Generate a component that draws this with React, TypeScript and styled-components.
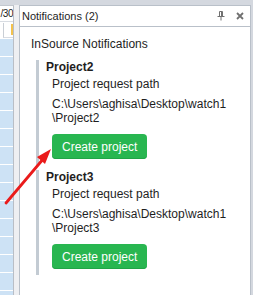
import React from 'react';
import styled, { createGlobalStyle } from 'styled-components';

interface Notice {
  name: string;
  folder: string;
}

const notices: Notice[] = [
  { name: 'Project2', folder: 'C:\\Users\\aghisa\\Desktop\\watch1' },
  { name: 'Project3', folder: 'C:\\Users\\aghisa\\Desktop\\watch1' },
];

const GlobalStyle = createGlobalStyle`
  html, body {
    margin: 0;
    padding: 0;
    background: #ffffff;
  }
  body {
    font-family: 'Liberation Sans', Arial, sans-serif;
    color: #1e1e1e;
  }
`;

const Screen = styled.div`
  position: relative;
  width: 253px;
  height: 295px;
  overflow: hidden;
  display: flex;
  flex-direction: column;
  background: #d4d8df;
`;

const TopStrip = styled.div`
  height: 5px;
  flex: none;
`;

const Body = styled.div`
  flex: 1;
  display: flex;
  min-height: 0;
`;

const Grid = styled.div`
  width: 13px;
  flex: none;
  display: flex;
  flex-direction: column;
  gap: 1px;
  background: #ffffff;
  border-right: 1px solid #b9bec6;
  border-top: 1px solid #c3c8cf;
`;

const GridHead = styled.div`
  height: 15px;
  flex: none;
  display: flex;
  justify-content: flex-end;
  align-items: center;
  font-size: 10px;
  letter-spacing: -0.5px;
  overflow: hidden;
  white-space: nowrap;
  border-bottom: 1px solid #d8dce2;
`;

const GridSub = styled.div`
  height: 14px;
  flex: none;
  position: relative;
  border-left: 1px solid #c9ced5;
  margin-left: 3px;
  border-bottom: 1px solid #d8dce2;
`;

const SubMark = styled.span`
  position: absolute;
  right: 0;
  top: 1px;
  width: 2px;
  height: 11px;
  background: #f3c24e;
`;

const GridCell = styled.div`
  height: 17px;
  flex: none;
  background: #cde2f5;
`;

const Splitter = styled.div`
  width: 5px;
  flex: none;
  background: #eeeff2;
`;

const Panel = styled.div`
  flex: 1;
  display: flex;
  flex-direction: column;
  background: #ffffff;
  border: 1px solid #b9c0c9;
  border-bottom: none;
  margin-right: 2px;
`;

const TitleBar = styled.div`
  height: 20px;
  flex: none;
  display: flex;
  align-items: center;
  padding-left: 2px;
  padding-right: 6px;
  font-size: 11px;
  border-bottom: 1px solid #b9c0c9;
`;

const TitleText = styled.span`
  flex: 1;
`;

const ToolIcon = styled.svg<{ gap: number }>`
  display: block;
  margin-left: ${p => p.gap}px;
`;

const Content = styled.div`
  padding: 10px 0 0 11px;
`;

const Heading = styled.div`
  font-size: 12px;
  line-height: 14px;
  margin-bottom: 9px;
`;

const Cards = styled.div`
  display: flex;
  flex-direction: column;
  gap: 5px;
  padding-left: 5px;
`;

const Card = styled.div`
  border-left: 3px solid #c3cbd3;
  padding: 0 0 6px 7px;
`;

const CardTitle = styled.div`
  font-size: 12px;
  line-height: 14px;
  font-weight: bold;
`;

const CardBody = styled.div`
  padding-left: 6px;
  font-size: 12px;
  line-height: 14px;
`;

const Label = styled.div`
  margin-top: 3px;
`;

const Path = styled.div`
  margin-top: 6px;
  width: 190px;
`;

const CreateButton = styled.button`
  display: block;
  margin-top: 9px;
  height: 25px;
  padding: 0 10px;
  border: none;
  border-radius: 4px;
  background: #28b650;
  box-shadow: inset 0 -1px 0 #21a446;
  color: #ffffff;
  font-family: 'Liberation Sans', Arial, sans-serif;
  font-size: 12px;
  cursor: pointer;
`;

const Arrow = styled.svg`
  position: absolute;
  left: 0;
  top: 0;
  pointer-events: none;
`;

const App = () => {
  const rows = Array.from({ length: 15 });
  return (
    <>
      <GlobalStyle />
      <Screen>
        <TopStrip />
        <Body>
          <Grid>
            <GridHead>/30</GridHead>
            <GridSub>
              <SubMark />
            </GridSub>
            {rows.map((_, i) => (
              <GridCell key={i} />
            ))}
          </Grid>
          <Splitter />
          <Panel>
            <TitleBar>
              <TitleText>Notifications (2)</TitleText>
              <ToolIcon gap={6} width="8" height="10" viewBox="0 0 8 10">
                <path d="M2.5 0.5h3v5h-3z M0.5 5.5h7 M4 5.5v4 M4.5 0.5v5" fill="none" stroke="#707070" strokeWidth="1" />
              </ToolIcon>
              <ToolIcon gap={11} width="8" height="8" viewBox="0 0 8 8">
                <path d="M1 1l6 6M7 1l-6 6" stroke="#707070" strokeWidth="1.8" />
              </ToolIcon>
            </TitleBar>
            <Content>
              <Heading>InSource Notifications</Heading>
              <Cards>
                {notices.map(n => (
                  <Card key={n.name}>
                    <CardTitle>{n.name}</CardTitle>
                    <CardBody>
                      <Label>Project request path</Label>
                      <Path>
                        {n.folder}
                        <br />\{n.name}
                      </Path>
                      <CreateButton>Create project</CreateButton>
                    </CardBody>
                  </Card>
                ))}
              </Cards>
            </Content>
          </Panel>
        </Body>
        <Arrow width="253" height="295" viewBox="0 0 253 295">
          <path d="M6 203L44 158" stroke="#ea1b1b" strokeWidth="2.8" strokeLinecap="round" />
          <path d="M51 149L37 157L45 164Z" fill="#ea1b1b" />
        </Arrow>
      </Screen>
    </>
  );
};

export default App;
